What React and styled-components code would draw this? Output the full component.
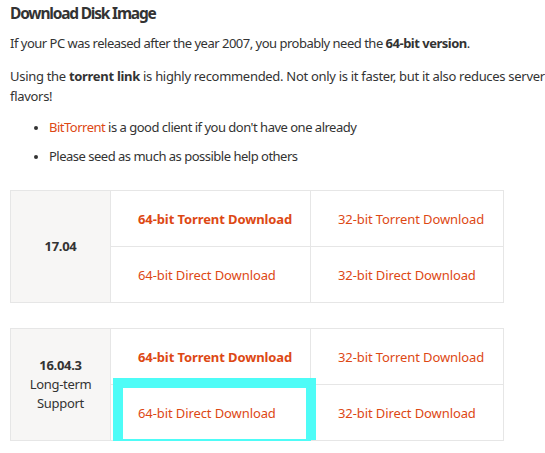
import React from "react";
import styled, { createGlobalStyle } from "styled-components";

const Global = createGlobalStyle`
  html, body { margin: 0; padding: 0; background: #fff; overflow: hidden; }
  body { font-family: "Noto Sans", "Open Sans", sans-serif; color: #333; }
`;

const Page = styled.div`
  padding: 1px 0 0 10px;
  width: 700px;
`;

const Heading = styled.h2`
  margin: 0;
  font-size: 15.5px;
  line-height: 24px;
  font-weight: 700;
  letter-spacing: -1.2px;
  color: #333;
`;

const Para = styled.p`
  margin: ${(p) => p.$mt}px 0 0;
  font-size: 13px;
  line-height: 20px;
  letter-spacing: ${(p) => p.$ls || -0.5}px;
  white-space: nowrap;
`;

const List = styled.ul`
  margin: 11px 0 0;
  padding: 0 0 0 39px;
  font-size: 13px;
  line-height: 20px;
  letter-spacing: -0.5px;
`;

const Item = styled.li`
  margin-top: ${(p) => (p.$first ? 0 : 9)}px;
  &::marker { color: #333; font-size: 11px; }
`;

const Link = styled.a`
  color: #dd4814;
  text-decoration: none;
  font-weight: ${(p) => (p.$bold ? 700 : 400)};
`;

const Grid = styled.div`
  display: grid;
  grid-template-columns: 100px 200px 193px;
  grid-template-rows: 56px 56px;
  width: 494px;
  margin-top: ${(p) => p.$mt}px;
  border-top: 1px solid #e6e6e6;
  border-left: 1px solid #e6e6e6;
  box-sizing: border-box;
`;

const Version = styled.div`
  grid-row: 1 / span 2;
  background: #f7f6f5;
  border-right: 1px solid #e6e6e6;
  border-bottom: 1px solid #e6e6e6;
  display: flex;
  flex-direction: column;
  align-items: center;
  justify-content: center;
  font-size: 13px;
  line-height: 19px;
  text-align: center;
  letter-spacing: -0.3px;
`;

const Strong = styled.strong`
  font-weight: 700;
`;

const Cell = styled.div`
  position: relative;
  border-right: 1px solid #e6e6e6;
  border-bottom: 1px solid #e6e6e6;
  display: flex;
  align-items: center;
  padding-left: 27px;
  font-size: 13px;
  letter-spacing: -0.1px;
`;

const Highlight = styled.div`
  position: absolute;
  left: 2px;
  top: -7px;
  width: 203px;
  height: 71px;
  box-sizing: border-box;
  border: 10px solid #4efcf7;
  pointer-events: none;
`;

function Release({ mt, children, highlight }) {
  return (
    <Grid $mt={mt}>
      <Version>{children}</Version>
      <Cell><Link $bold href="#">64-bit Torrent Download</Link></Cell>
      <Cell><Link href="#">32-bit Torrent Download</Link></Cell>
      <Cell>
        <Link href="#">64-bit Direct Download</Link>
        {highlight && <Highlight />}
      </Cell>
      <Cell><Link href="#">32-bit Direct Download</Link></Cell>
    </Grid>
  );
}

export default function App() {
  return (
    <>
      <Global />
      <Page>
        <Heading>Download Disk Image</Heading>
        <Para $mt={8}>
          If your PC was released after the year 2007, you probably need the <Strong>64-bit version</Strong>.
        </Para>
        <Para $mt={13} $ls={-0.3}>
          Using the <Strong>torrent link</Strong> is highly recommended. Not only is it faster, but it also reduces server load for all
          <br />
          flavors!
        </Para>
        <List>
          <Item $first><Link href="#">BitTorrent</Link> is a good client if you don't have one already</Item>
          <Item>Please seed as much as possible help others</Item>
        </List>
        <Release mt={24}><Strong>17.04</Strong></Release>
        <Release mt={25} highlight>
          <Strong>16.04.3</Strong>
          <span>Long-term</span>
          <span>Support</span>
        </Release>
      </Page>
    </>
  );
}
